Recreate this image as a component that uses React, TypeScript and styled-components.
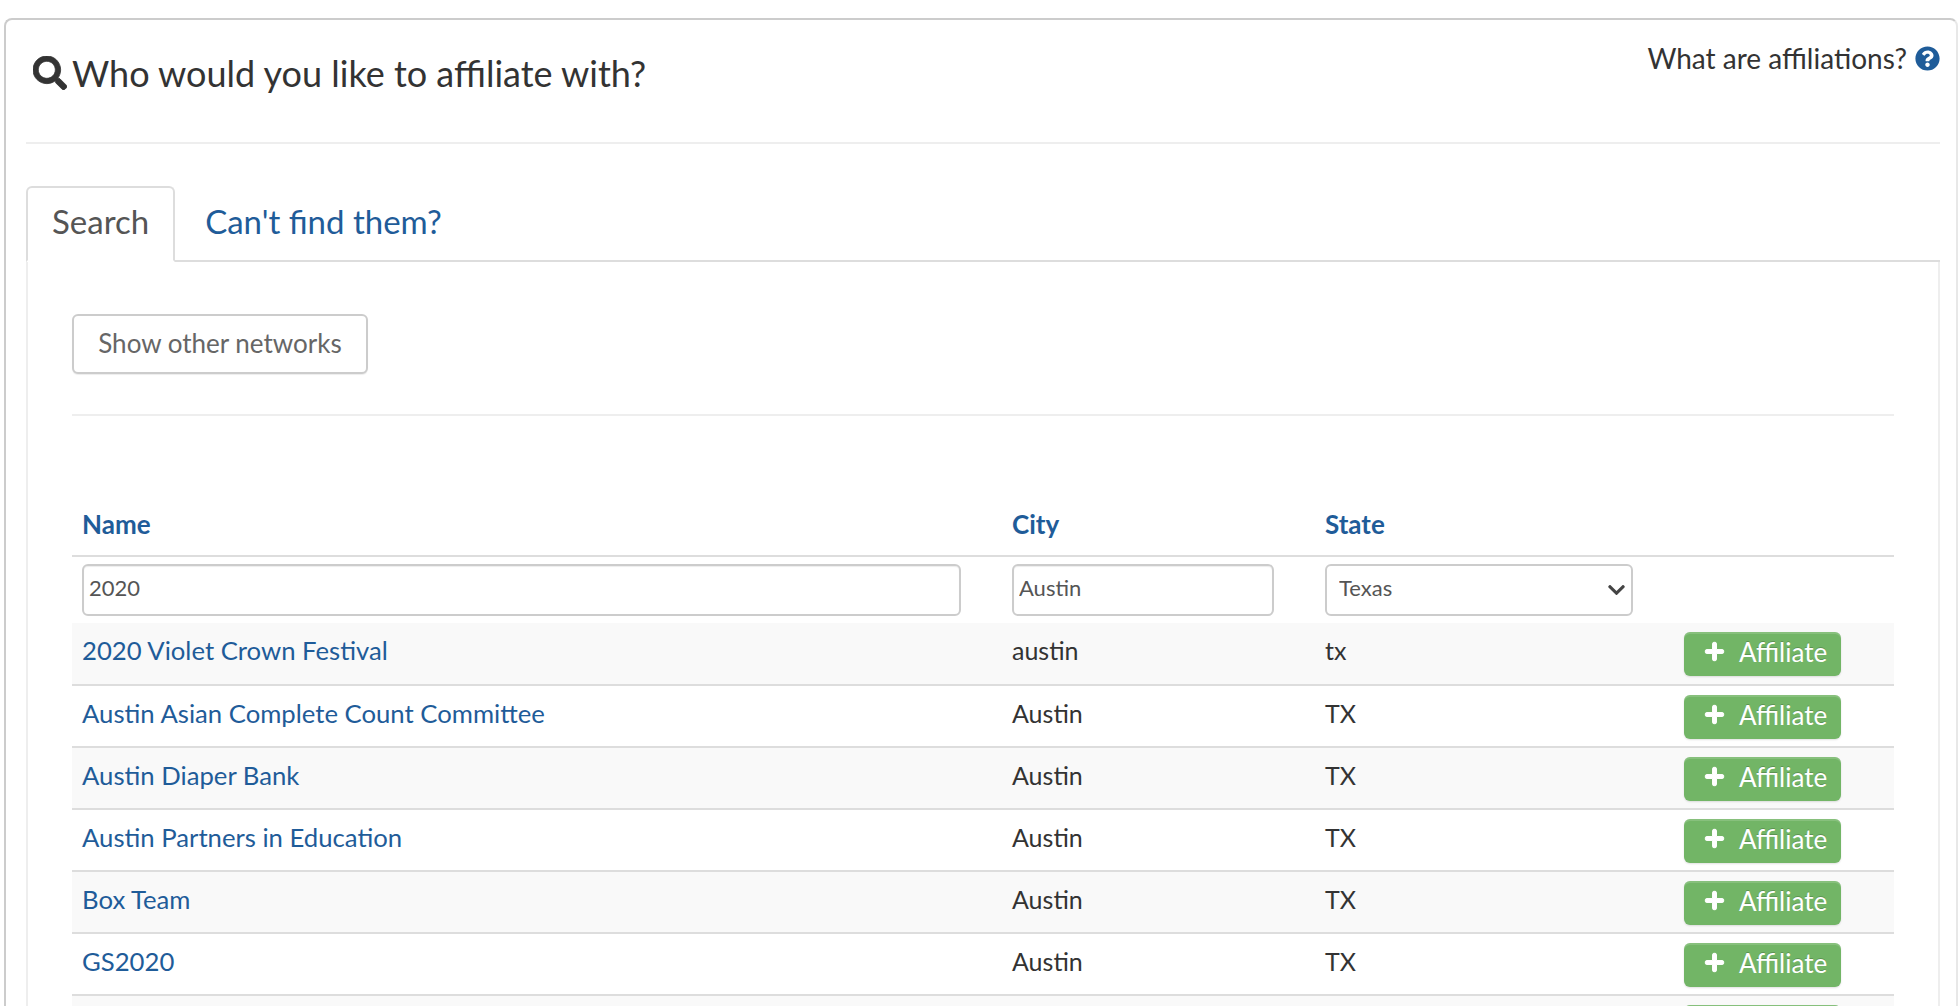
import React from "react";
import styled, { createGlobalStyle } from "styled-components";
import { FaSearch, FaQuestionCircle, FaPlus, FaChevronDown } from "react-icons/fa";

const rows = [
  { name: "2020 Violet Crown Festival", city: "austin", state: "tx" },
  { name: "Austin Asian Complete Count Committee", city: "Austin", state: "TX" },
  { name: "Austin Diaper Bank", city: "Austin", state: "TX" },
  { name: "Austin Partners in Education", city: "Austin", state: "TX" },
  { name: "Box Team", city: "Austin", state: "TX" },
  { name: "GS2020", city: "Austin", state: "TX" },
  { name: "", city: "", state: "" },
];

export default function App() {
  return (
    <Page>
      <GlobalStyle />
      <Panel>
        <Header>
          <Title>
            <SearchIcon />
            Who would you like to affiliate with?
          </Title>
          <HelpLink>
            What are affiliations?
            <HelpIcon />
          </HelpLink>
        </Header>

        <Tabs>
          <Tab $active>Search</Tab>
          <Tab>Can't find them?</Tab>
        </Tabs>

        <TabBody>
          <OutlineButton>Show other networks</OutlineButton>
          <Divider />
          <Table>
            <thead>
              <tr>
                <Th>Name</Th>
                <Th>City</Th>
                <Th>State</Th>
                <Th />
              </tr>
            </thead>
            <tbody>
              <FilterRow>
                <td>
                  <Input defaultValue="2020" />
                </td>
                <td>
                  <Input defaultValue="Austin" />
                </td>
                <td>
                  <SelectWrap>
                    <Select defaultValue="TX">
                      <option value="TX">Texas</option>
                    </Select>
                    <Chevron />
                  </SelectWrap>
                </td>
                <td />
              </FilterRow>
              {rows.map((row, i) => (
                <Row key={i} $striped={i % 2 == 0}>
                  <NameCell>
                    <NameLink>{row.name}</NameLink>
                  </NameCell>
                  <Td>{row.city}</Td>
                  <Td>{row.state}</Td>
                  <Td>
                    <AffiliateButton>
                      {row.name != "" && (
                        <>
                          <FaPlus />
                          Affiliate
                        </>
                      )}
                    </AffiliateButton>
                  </Td>
                </Row>
              ))}
            </tbody>
          </Table>
        </TabBody>
      </Panel>
    </Page>
  );
}

const GlobalStyle = createGlobalStyle`
  html, body {
    margin: 0;
    padding: 0;
    overflow: hidden;
    background: #fff;
  }
  body {
    font-family: "Lato", "Liberation Sans", sans-serif;
    color: #333;
  }
`;

const Page = styled.div`
  height: 1006px;
  overflow: hidden;
  padding: 18px 0 0 4px;
  box-sizing: border-box;
`;

const Panel = styled.div`
  width: 1954px;
  box-sizing: border-box;
  border: 2px solid #ccc;
  border-right-color: #e8e8e8;
  border-bottom: none;
  border-radius: 8px 8px 0 0;
  padding: 0 16px 0 20px;
`;

const Header = styled.div`
  display: flex;
  justify-content: space-between;
  align-items: flex-start;
  height: 122px;
  border-bottom: 2px solid #eee;
`;

const Title = styled.h1`
  display: flex;
  align-items: center;
  gap: 5px;
  margin: 31px 0 0 7px;
  font-size: 36px;
  line-height: 44px;
  font-weight: 400;
  color: #333;
`;

const SearchIcon = styled(FaSearch)`
  width: 34px;
  height: 34px;
  color: #333;
  stroke: currentColor;
  stroke-width: 12px;
`;

const HelpLink = styled.div`
  display: flex;
  align-items: center;
  gap: 8px;
  margin: 22px 0 0 0;
  font-size: 28px;
  line-height: 32px;
  color: #333;
`;

const HelpIcon = styled(FaQuestionCircle)`
  width: 25px;
  height: 25px;
  color: #1f5c99;
`;

const Tabs = styled.div`
  display: flex;
  height: 74px;
  margin-top: 42px;
  border-bottom: 2px solid #ddd;
`;

const Tab = styled.div<{ $active?: boolean }>`
  box-sizing: border-box;
  height: 76px;
  padding: 0 ${(p) => (p.$active ? "24px" : "28px")};
  margin-bottom: -2px;
  font-size: 33px;
  line-height: 66px;
  color: ${(p) => (p.$active ? "#555" : "#1f5c99")};
  background: ${(p) => (p.$active ? "#fff" : "transparent")};
  border: 2px solid ${(p) => (p.$active ? "#ddd" : "transparent")};
  border-bottom-color: ${(p) => (p.$active ? "#fff" : "transparent")};
  border-radius: 6px 6px 0 0;
`;

const TabBody = styled.div`
  padding: 52px 44px 0 44px;
  border-left: 2px solid #eee;
  border-right: 2px solid #eee;
`;

const OutlineButton = styled.button`
  display: block;
  box-sizing: border-box;
  width: 296px;
  height: 60px;
  padding: 0 0 2px;
  font-family: inherit;
  font-size: 26px;
  color: #666;
  background: #fff;
  border: 2px solid #ccc;
  border-radius: 6px;
  box-shadow: 0 1px 1px rgba(0, 0, 0, 0.075);
`;

const Divider = styled.hr`
  height: 2px;
  margin: 40px 0 0;
  border: none;
  background: #eee;
`;

const Table = styled.table`
  width: 1822px;
  margin-top: 90px;
  table-layout: fixed;
  border-collapse: collapse;
  font-size: 25px;
`;

const Th = styled.th`
  box-sizing: border-box;
  height: 50px;
  padding: 3px 0 0 10px;
  text-align: left;
  vertical-align: top;
  font-size: 26px;
  line-height: 30px;
  font-weight: 700;
  color: #1f5c99;
  border-bottom: 2px solid #ddd;

  &:nth-child(1) {
    width: 930px;
  }
  &:nth-child(2) {
    width: 313px;
  }
  &:nth-child(3) {
    width: 359px;
  }
`;

const FilterRow = styled.tr`
  height: 66px;

  td {
    padding: 7px 0 7px 10px;
    vertical-align: top;
  }
`;

const Input = styled.input`
  display: block;
  box-sizing: border-box;
  width: calc(100% - 41px);
  height: 52px;
  padding: 0 5px 5px;
  font-family: inherit;
  font-size: 22px;
  color: #555;
  background: #fff;
  border: 2px solid #ccc;
  border-radius: 6px;
  box-shadow: inset 0 1px 1px rgba(0, 0, 0, 0.075);
  outline: none;
`;

const SelectWrap = styled.div`
  position: relative;
  width: 308px;
`;

const Select = styled.select`
  display: block;
  width: 100%;
  height: 52px;
  padding: 0 12px 5px;
  appearance: none;
  font-family: inherit;
  font-size: 22px;
  color: #555;
  background: #fff;
  border: 2px solid #ccc;
  border-radius: 6px;
  outline: none;
`;

const Chevron = styled(FaChevronDown)`
  position: absolute;
  top: 16px;
  right: 8px;
  width: 17px;
  height: 20px;
  color: #444;
  pointer-events: none;
`;

const Row = styled.tr<{ $striped: boolean }>`
  height: 62px;
  background: ${(p) => (p.$striped ? "#f9f9f9" : "#fff")};
  border-bottom: 2px solid #ddd;
`;

const Td = styled.td`
  padding: 0 0 0 10px;
  vertical-align: top;
  line-height: 54px;
  color: #333;
`;

const NameCell = styled(Td)`
  font-size: 25.7px;
  line-height: 55px;
`;

const NameLink = styled.a`
  color: #1f5c99;
`;

const AffiliateButton = styled.button`
  display: flex;
  align-items: center;
  gap: 14px;
  box-sizing: border-box;
  width: 157px;
  height: 44px;
  margin-top: 9px;
  padding: 0 0 5px 20px;
  font-family: inherit;
  font-size: 26px;
  color: #fff;
  text-shadow: 0 -1px 0 rgba(0, 0, 0, 0.2);
  background: #72b566;
  border: none;
  border-radius: 6px;
  box-shadow: inset 0 2px 0 rgba(255, 255, 255, 0.15), 0 1px 2px rgba(0, 0, 0, 0.12);

  svg {
    width: 21px;
    height: 21px;
    stroke: currentColor;
    stroke-width: 24px;
  }
`;
